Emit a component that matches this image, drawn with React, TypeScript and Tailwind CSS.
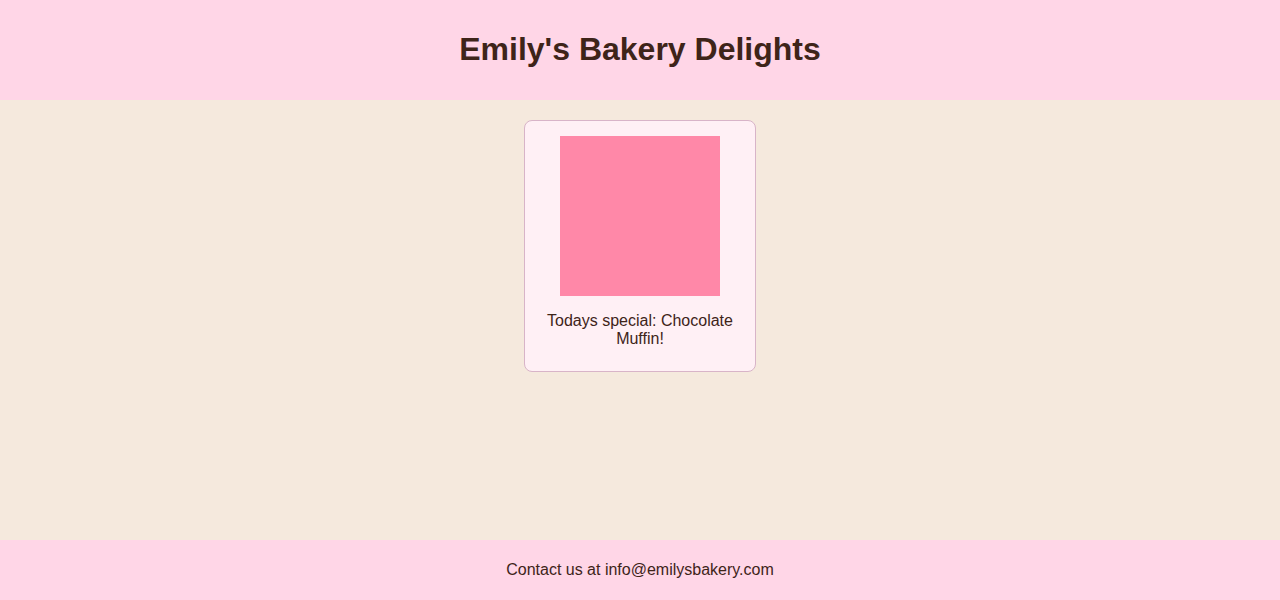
export default function App() {
  return (
    <div className="min-h-[600px] flex flex-col bg-[#f5e9dd] text-[#3e2419]" style={{ fontFamily: '"Liberation Sans", Arial, sans-serif' }}>
      <header className="h-[100px] bg-[#ffd6e7] flex items-center justify-center pb-[2px]">
        <h1 className="text-[32px] font-bold leading-[37px]">Emily's Bakery Delights</h1>
      </header>
      <main className="h-[440px] flex justify-center pt-[20px]">
        <div className="w-[232px] h-[252px] self-start border border-[#d8b4c8] rounded-[8px] bg-[#fff0f5] p-[15px] flex flex-col items-center">
          <div className="w-[160px] h-[160px] bg-[#ff88a8] shrink-0" />
          <p className="mt-[16px] text-[16px] leading-[18px] text-center">Todays special: Chocolate Muffin!</p>
        </div>
      </main>
      <footer className="h-[60px] bg-[#ffd6e7] flex items-center justify-center">
        <p className="text-[16px] leading-[18px]">Contact us at info@emilysbakery.com</p>
      </footer>
    </div>
  );
}
